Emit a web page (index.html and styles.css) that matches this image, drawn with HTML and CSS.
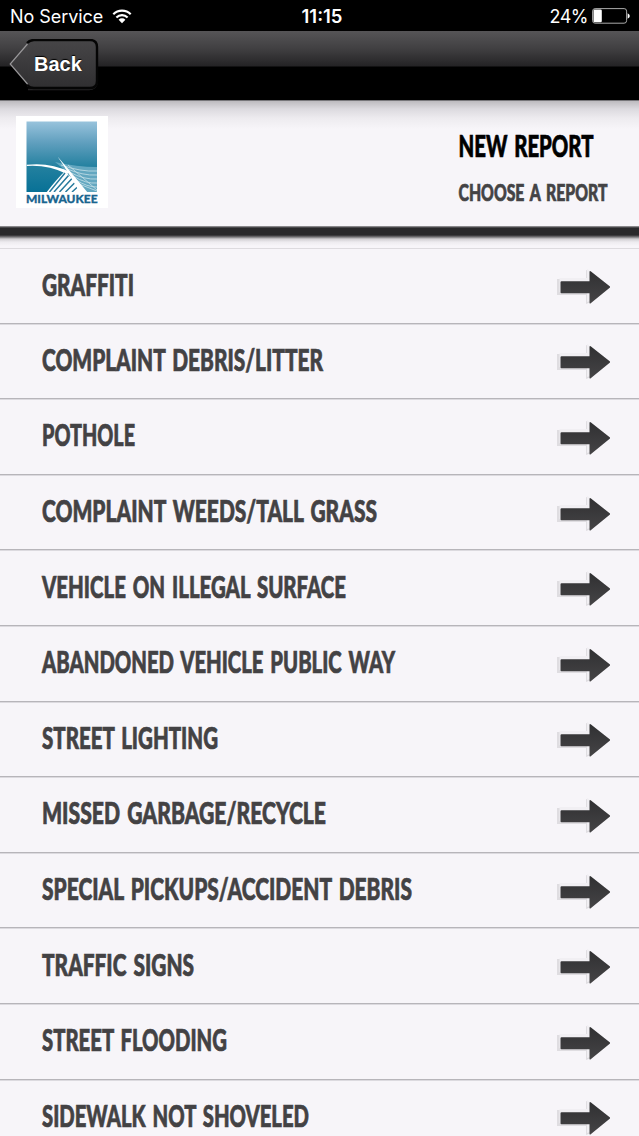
FILE: index.html
```
<!DOCTYPE html>
<html lang="en">
<head>
  <meta charset="UTF-8">
  <meta name="viewport" content="width=device-width, initial-scale=1.0">
  <title>New Report</title>
  <link rel="stylesheet" href="styles.css">
</head>
<body>

<div class="status-bar">
  <div class="carrier">
    <span class="carrier-name">No Service</span>
    <svg class="wifi" width="20" height="15" viewBox="0 0 20 15">
      <path d="M1.3 5.2a12.3 12.3 0 0 1 17.4 0M4.4 8.5a8 8 0 0 1 11.2 0" fill="none" stroke="#fff" stroke-width="2.2"/>
      <path d="M10 14.2L6.6 10.7a4.8 4.8 0 0 1 6.8 0z" fill="#fff"/>
    </svg>
  </div>
  <div class="clock">11:15</div>
  <div class="battery">
    <span class="battery-level">24%</span>
    <svg width="38" height="16" viewBox="0 0 38 16">
      <rect x=".6" y=".6" width="34" height="14.6" rx="2.5" fill="none" stroke="#aaa"/>
      <rect x="1.5" y="1.6" width="8.3" height="12.6" rx="1.2" fill="#fff"/>
      <path d="M35.6 5.2q2.2 1 2.2 2.8t-2.2 2.8z" fill="#fff"/>
    </svg>
  </div>
</div>

<div class="nav-bar">
  <a class="back-button">
    <svg class="back-shape" width="92" height="54" viewBox="0 0 92 54">
      <defs>
        <linearGradient id="back-fill" x1="0" y1="0" x2="0" y2="1">
          <stop offset="0" stop-color="#464547"/>
          <stop offset="1" stop-color="#302f31"/>
        </linearGradient>
      </defs>
      <path d="M19 50.5h61q7 0 8-6" fill="none" stroke="#242325" stroke-width="1.5"/>
      <path d="M18 3h64q6 0 6 6v33q0 6-6 6H18z" fill="url(#back-fill)"/>
      <path d="M19 5L1.5 25L19 45z" fill="url(#back-fill)"/>
      <path d="M18 4q3-3 7-3h56q7 0 7 7v34q0 7-7 7H25q-4 0-7-3" fill="none" stroke="#050505" stroke-width="2.4"/>
      <path d="M18.5 5L1.2 25L18.5 45" fill="none" stroke="#99989a" stroke-width="1.2"/>
    </svg>
    <span class="back-label">Back</span>
  </a>
</div>

<div class="header">
  <div class="logo">
    <svg width="92" height="92" viewBox="0 0 92 92">
      <defs>
        <linearGradient id="sky" x1="0" y1="0" x2="0" y2="1">
          <stop offset="0" stop-color="#98c3dc"/>
          <stop offset=".3" stop-color="#609fbe"/>
          <stop offset=".65" stop-color="#22809f"/>
          <stop offset="1" stop-color="#087196"/>
        </linearGradient>
        <clipPath id="frame"><rect x="10.5" y="5.5" width="70.5" height="70.5"/></clipPath>
      </defs>
      <rect x="10.5" y="5.5" width="70.5" height="70.5" fill="url(#sky)"/>
      <g clip-path="url(#frame)">
        <path d="M39 46Q61 51 81 51V76H66Q57 59 39 46z" fill="#63a7c0"/>
        <path d="M45 49Q65 56 81 55M49 52Q67 60 81 59M53 56Q69 64 81 63M57 60Q70 68 81 67M60 64Q71 71 81 71M63 68L81 75M52 49L81 74" fill="none" stroke="#c6e1e8" stroke-width=".8"/>
        <path d="M10.5 48.8Q34 46 54 56L51 58Q32 48.5 10.5 50z" fill="#fff"/>
        <path d="M49 55Q40 64 30 77H70z" fill="#fff"/>
        <path d="M49 57L33.5 76M52.5 59.5L38 76M56 62.5L43.5 76M59 66.5L49.5 76M62 70.5L56 76" stroke="#277a9d" stroke-width="1.5"/>
        <path d="M41.5 40.5Q49 49 72 77H64Q51 54 41.5 40.5z" fill="#fff"/>
      </g>
      <text x="10" y="86.8" textLength="71.5" lengthAdjust="spacingAndGlyphs" class="logo-text">MILWAUKEE</text>
    </svg>
  </div>
  <svg class="titles" width="165" height="100">
    <text class="title" x="1.5" y="40.5" textLength="135" lengthAdjust="spacingAndGlyphs">NEW REPORT</text>
    <text class="subtitle" x="1.5" y="85" textLength="149" lengthAdjust="spacingAndGlyphs">CHOOSE A REPORT</text>
  </svg>
</div>
<div class="divider"></div>

<div class="report-list" id="report-list"></div>

<script>
  // Report name and the width its condensed label takes
  const reports = [
    ['GRAFFITI', 92],
    ['COMPLAINT DEBRIS/LITTER', 281],
    ['POTHOLE', 93],
    ['COMPLAINT WEEDS/TALL GRASS', 335],
    ['VEHICLE ON ILLEGAL SURFACE', 304],
    ['ABANDONED VEHICLE PUBLIC WAY', 353],
    ['STREET LIGHTING', 176],
    ['MISSED GARBAGE/RECYCLE', 284],
    ['SPECIAL PICKUPS/ACCIDENT DEBRIS', 370],
    ['TRAFFIC SIGNS', 152],
    ['STREET FLOODING', 185],
    ['SIDEWALK NOT SHOVELED', 267]
  ];

  const arrow = `
    <svg class="arrow" width="56" height="40" viewBox="0 0 56 40">
      <defs>
        <linearGradient id="arrow-fill" x1="0" y1="0" x2="0" y2="1">
          <stop offset="0" stop-color="#303032"/>
          <stop offset="1" stop-color="#454446"/>
        </linearGradient>
      </defs>
      <path d="M2 12h29V3l5 2v30l-5 2V28H2z" fill="#dfdde1"/>
      <path d="M4.5 11H32V2l3 2v30l-3 1V25H4.5z" fill="#f1eff3"/>
      <path d="M6.5 14.2h28V4.5q.5-1 1.5 0L55 19.5v1L36 36q-1 1-1.5 0V26.2h-28q-1 0-1-1V15.2q0-1 1-1z" fill="url(#arrow-fill)"/>
    </svg>`;

  document.getElementById('report-list').innerHTML = reports.map(([name, width]) => `
    <div class="report-row">
      <svg class="report-label" width="${width + 2}" height="36">
        <text x="0" y="27" textLength="${width}" lengthAdjust="spacingAndGlyphs">${name}</text>
      </svg>
      ${arrow}
    </div>`).join('');
</script>

</body>
</html>
```
FILE: styles.css
```
body {
  margin: 0;
  height: 1136px;
  overflow: hidden;
  background: #f7f5f9;
  font-family: Inter, "Liberation Sans", sans-serif;
}

svg {
  display: block;
  flex-shrink: 0;
}

/* Status bar */
.status-bar {
  height: 31px;
  padding: 1px 9px 0 10px;
  box-sizing: border-box;
  display: grid;
  grid-template-columns: 1fr auto 1fr;
  align-items: center;
  background: #000;
  color: #fff;
  font-size: 18px;
}

.carrier,
.battery {
  display: flex;
  align-items: center;
  gap: 9px;
}

.carrier-name {
  letter-spacing: -0.05px;
}

.battery {
  justify-content: flex-end;
  gap: 4px;
}

.battery-level {
  letter-spacing: -0.5px;
}

.clock {
  font-weight: 600;
  font-size: 18.5px;
  padding-left: 4px;
}

/* Navigation bar */
.nav-bar {
  height: 70px;
  box-sizing: border-box;
  padding: 8px 0 0 9px;
  border-bottom: 1px solid #77767a;
  background: linear-gradient(#565557 0, #403f41 18px, #242325 35px, #000 36px);
}

.back-button {
  display: grid;
  width: 92px;
}

.back-shape,
.back-label {
  grid-area: 1 / 1;
}

.back-label {
  z-index: 1;
  padding: 13px 0 0 25px;
  color: #fff;
  font: bold 20px/24px "Liberation Sans", sans-serif;
  text-shadow: 0 -1px 1px #000;
}

/* Header */
.header {
  height: 125px;
  display: flex;
  justify-content: space-between;
  box-sizing: border-box;
  padding: 15px 17px 0 16px;
  background: linear-gradient(#bdbbbf 0, #dcdadf 8px, #edebef 17px, #f7f5f9 28px);
}

.logo {
  width: 92px;
  height: 92px;
  background: #fff;
}

.logo-text {
  font: 900 11px Lato, sans-serif;
  fill: #19658f;
  stroke: #19658f;
  stroke-width: 0.3px;
}

.titles {
  overflow: visible;
}

.title,
.subtitle,
.report-label text {
  font-family: Lato, sans-serif;
  font-weight: 900;
  word-spacing: 3px;
  stroke-width: 0.7px;
}

.title {
  font-size: 29.5px;
  fill: #000;
  stroke: #000;
}

.subtitle {
  font-size: 23px;
  fill: #444345;
  stroke: #444345;
}

.divider {
  height: 22px;
  background: linear-gradient(#a8a7aa 0, #29292b 2px, #29292b 9px, #777679 11px, #d0ced2 13px, #edebef 16px, #f7f5f9 20px);
}

/* Report list */
.report-list {
  border-top: 1px solid #dddbdf;
}

.report-row {
  height: 75.6px;
  box-sizing: border-box;
  padding: 2px 28px 0 42px;
  display: flex;
  align-items: center;
  justify-content: space-between;
  border-bottom: 1px solid #b7b5ba;
  box-shadow: 0 1px #dcdadf;
}

.report-row:first-child {
  height: 74.6px;
}

.report-label {
  overflow: visible;
}

.report-label text {
  font-size: 29.5px;
  fill: #434244;
  stroke: #434244;
}

.arrow {
  padding-top: 1px;
}
```
